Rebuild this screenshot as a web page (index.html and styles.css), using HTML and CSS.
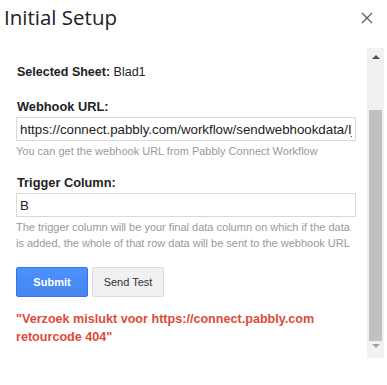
FILE: index.html
```html
<!DOCTYPE html>
<html lang="en">
<head>
    <meta charset="UTF-8">
    <meta name="viewport" content="width=device-width, initial-scale=1.0">
    <title>Initial Setup</title>
    <link rel="stylesheet" href="styles.css">
</head>
<body>
    <div class="dialog">
        <!-- Dialog title bar -->
        <div class="dialog-header">
            <h1>Initial Setup</h1>
            <svg class="close" width="12" height="12" viewBox="0 0 12 12">
                <path d="M1 1 L11 11 M11 1 L1 11" stroke="#5f6368" stroke-width="1.4" fill="none"/>
            </svg>
        </div>

        <!-- Scrolling frame -->
        <div class="dialog-frame">
            <div class="content">
                <p class="sheet"><b>Selected Sheet:</b> Blad1</p>

                <div class="form-group">
                    <label for="webhook">Webhook URL:</label>
                    <input type="text" id="webhook" value="https://connect.pabbly.com/workflow/sendwebhookdata/IjU3NjUwNTZhMDYzZTA0MzE1MjZmNTUzMzUxMzUi_pc">
                    <div class="hint">You can get the webhook URL from Pabbly Connect Workflow</div>
                </div>

                <div class="form-group">
                    <label for="trigger">Trigger Column:</label>
                    <input type="text" id="trigger" value="B">
                    <div class="hint">The trigger column will be your final data column on which if the data is added, the whole of that row data will be sent to the webhook URL</div>
                </div>

                <div class="buttons">
                    <button class="action">Submit</button>
                    <button>Send Test</button>
                </div>

                <div class="error">"Verzoek mislukt voor https://connect.pabbly.com retourcode 404"</div>
            </div>

            <div class="scrollbar">
                <div class="arrow up"></div>
                <div class="track"><div class="thumb"></div></div>
                <div class="arrow down"></div>
            </div>
        </div>
    </div>
</body>
</html>
```

FILE: styles.css
```css
/* General */
body {
    margin: 0;
    background: #ffffff;
    font-family: "Liberation Sans", Arial, sans-serif;
    font-size: 13px;
    color: #222222;
}

.dialog {
    width: 387px;
    height: 385px;
    display: flex;
    flex-direction: column;
}

/* Header */
.dialog-header {
    height: 48px;
    display: flex;
    justify-content: space-between;
    align-items: flex-start;
    padding: 0 14px 0 4px;
    box-sizing: border-box;
}

.dialog-header h1 {
    margin: 3px 0 0 0;
    font-family: "Open Sans", Roboto, sans-serif;
    font-weight: 400;
    font-size: 20.5px;
    color: #202124;
}

.close {
    margin-top: 12px;
}

/* Frame with fake scrollbar */
.dialog-frame {
    display: flex;
    height: 310px;
    padding-right: 3px;
}

.content {
    flex: 1;
    padding: 17px 0 0 16px;
    overflow: hidden;
}

.sheet {
    margin: 0 0 20px 1px;
    font-size: 12.5px;
}

.form-group {
    margin-bottom: 16px;
}

.form-group label {
    display: block;
    font-size: 12.8px;
    font-weight: bold;
    color: #222;
    margin: 0 0 3px 1px;
}

.form-group input {
    width: 340px;
    height: 24px;
    box-sizing: border-box;
    border: 1px solid #d9d9d9;
    padding: 0 3px;
    font-family: "Liberation Sans", Arial, sans-serif;
    font-size: 13.3px;
    color: #222;
    outline: none;
}

.hint {
    margin-top: 2px;
    font-size: 11px;
    line-height: 16px;
    color: #999999;
    width: 342px;
}

/* Buttons */
.buttons {
    display: flex;
    gap: 4px;
    margin-top: 11px;
}

button {
    height: 30px;
    min-width: 72px;
    padding: 0 10px;
    border: 1px solid #dcdcdc;
    border-radius: 2px;
    background: #f1f1f1;
    font-family: "Liberation Sans", Arial, sans-serif;
    font-size: 11px;
    color: #333;
}

button.action {
    background: linear-gradient(#4d90fe, #4787ed);
    border-color: #3079ed;
    color: #fff;
    font-weight: bold;
}

.error {
    margin-top: 13px;
    width: 330px;
    font-size: 12.6px;
    line-height: 18px;
    font-weight: bold;
    color: #dd4b39;
}

/* Scrollbar */
.scrollbar {
    width: 17px;
    background: #f1f1f1;
    display: flex;
    flex-direction: column;
}

.arrow {
    height: 17px;
    position: relative;
}

.arrow::after {
    content: "";
    position: absolute;
    left: 5px;
    border-left: 4px solid transparent;
    border-right: 4px solid transparent;
}

.arrow.up::after {
    top: 7px;
    border-bottom: 4px solid #505050;
}

.arrow.down::after {
    top: 3px;
    border-top: 4px solid #a3a3a3;
}

.track {
    flex: 1;
    display: flex;
    flex-direction: column;
    padding: 0 2px;
}

.thumb {
    margin-top: 45px;
    flex: 1;
    background: #c1c1c1;
}
```
